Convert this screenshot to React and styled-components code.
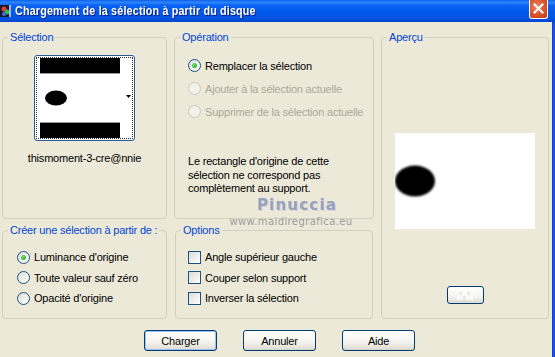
import React from 'react';
import styled, { createGlobalStyle } from 'styled-components';

const GlobalStyle = createGlobalStyle`
  html, body {
    margin: 0;
    padding: 0;
    background: #ece9d8;
  }
  body {
    font-family: 'Liberation Sans', Arial, sans-serif;
    font-size: 11px;
    letter-spacing: -0.2px;
    color: #000;
  }
`;

const Window = styled.div`
  position: relative;
  width: 555px;
  height: 357px;
  display: flex;
  flex-direction: column;
  overflow: hidden;
  background: #ece9d8;
`;

const TitleBar = styled.div`
  height: 22px;
  flex: none;
  display: flex;
  align-items: center;
  background: linear-gradient(
    to bottom,
    #0a5ee8 0%,
    #2f86fb 10%,
    #0a62f4 25%,
    #0058e8 55%,
    #0053e0 85%,
    #0044cf 100%
  );
  color: #fff;
  padding-right: 7px;
`;

const TitleIcon = styled.svg`
  width: 12px;
  height: 14px;
  margin: 0 3px 0 0;
  flex: none;
`;

const TitleText = styled.div`
  flex: 1;
  font-family: 'Liberation Sans', Arial, sans-serif;
  font-weight: bold;
  font-size: 12.5px;
  letter-spacing: 0.2px;
  text-shadow: 1px 1px 0 #0a1e80;
  white-space: nowrap;
  transform: scaleX(0.86);
  transform-origin: left center;
`;

const CloseButton = styled.div`
  width: 17px;
  height: 18px;
  margin-top: -4px;
  border: 1px solid #fff;
  border-top: none;
  border-radius: 0 0 3px 3px;
  background: radial-gradient(circle at 40% 35%, #ee8a66 0%, #de5a32 45%, #c2370f 100%);
  display: flex;
  align-items: center;
  justify-content: center;
`;

const Body = styled.div`
  flex: 1;
  display: flex;
`;

const Content = styled.div`
  flex: 1;
  padding: 15px 0 0 2px;
  display: flex;
  flex-direction: column;
`;

const RightFrame = styled.div`
  width: 3px;
  background: linear-gradient(to right, #0831d9, #1658e8, #0a45d6);
`;

const Grid = styled.div`
  display: grid;
  grid-template-columns: 165px 200px 168px;
  grid-template-rows: 182px 89px;
  column-gap: 7px;
  row-gap: 11px;
`;

const Group = styled.div`
  position: relative;
  box-sizing: border-box;
  border: 1px solid #d0d0bf;
  border-radius: 4px;
  grid-column: ${(p) => p.$col};
  grid-row: ${(p) => p.$row};
  width: ${(p) => p.$width || 'auto'};
  margin-left: ${(p) => p.$shift || 0}px;
  display: flex;
  flex-direction: column;
  align-items: ${(p) => (p.$center ? 'center' : 'stretch')};
  padding: ${(p) => p.$pad || '0'};
`;

const Legend = styled.span`
  position: absolute;
  top: -8px;
  left: 5px;
  padding: 0 2px;
  background: #ece9d8;
  color: #0046d5;
  line-height: 14px;
  white-space: nowrap;
`;

const Thumb = styled.div`
  position: relative;
  width: 101px;
  height: 86px;
  box-sizing: border-box;
  border: 1px solid #2c5c94;
  border-radius: 3px;
  background: #fff;
  padding: 2px 1px 2px 5px;
  display: flex;
  &::after {
    content: '';
    position: absolute;
    inset: 1px;
    border: 1px dotted #333;
  }
`;

const ThumbArrow = styled.div`
  flex: 1;
  display: flex;
  align-items: center;
  justify-content: flex-end;
  padding-right: 2px;
  padding-bottom: 4px;
`;

const FileName = styled.div`
  margin-top: 11px;
  font-size: 11px;
  white-space: nowrap;
`;

const OptionRow = styled.label`
  display: flex;
  align-items: center;
  height: ${(p) => p.$h || 20}px;
  gap: 4px;
  color: ${(p) => (p.$disabled ? '#aca899' : '#000')};
  white-space: nowrap;
`;

const Radio = styled.span`
  width: 13px;
  height: 13px;
  box-sizing: border-box;
  border-radius: 50%;
  border: 1px solid ${(p) => (p.$disabled ? '#cac8bb' : '#1c5180')};
  background: ${(p) =>
    p.$disabled
      ? '#f2f1ea'
      : 'linear-gradient(135deg, #dcdcd7 0%, #f6f6f4 70%, #ffffff 100%)'};
  display: flex;
  align-items: center;
  justify-content: center;
  flex: none;
  &::after {
    content: '';
    display: ${(p) => (p.$checked ? 'block' : 'none')};
    width: 5px;
    height: 5px;
    border-radius: 50%;
    background: radial-gradient(circle at 35% 35%, #6fde6f, #21a121);
  }
`;

const Checkbox = styled.span`
  width: 13px;
  height: 13px;
  box-sizing: border-box;
  border: 1px solid #1c5180;
  background: linear-gradient(135deg, #dcdcd7 0%, #f4f4f2 70%, #ffffff 100%);
  flex: none;
`;

const Note = styled.p`
  margin: 0;
  line-height: 13.5px;
  font-size: 11px;
`;

const Preview = styled.div`
  margin-top: 95px;
  width: 140px;
  height: 96px;
  background: #fff;
  display: flex;
  align-items: center;
`;

const MiniButton = styled.div`
  margin-top: 57px;
  width: 37px;
  height: 18px;
  box-sizing: border-box;
  border: 1px solid #003c74;
  border-radius: 3px;
  background: linear-gradient(to bottom, #ffffff 0%, #f4f4f0 60%, #dcdad0 100%);
  display: flex;
  align-items: center;
  justify-content: center;
`;

const ButtonRow = styled.div`
  display: flex;
  gap: 26px;
  margin-top: 11px;
  padding-left: 142px;
`;

const Button = styled.button`
  width: 73px;
  height: 21px;
  box-sizing: border-box;
  border: 1px solid #003c74;
  border-radius: 3px;
  background: linear-gradient(to bottom, #ffffff 0%, #f5f4ef 55%, #e3e1d8 90%, #d6d0c5 100%);
  font-family: 'Liberation Sans', Arial, sans-serif;
  font-size: 11px;
  letter-spacing: -0.2px;
  color: #000;
  padding: 0;
  box-shadow: ${(p) => (p.$default ? 'inset 0 0 0 1px #9ec1f2' : 'none')};
`;

const Watermark = styled.div`
  position: absolute;
  left: 222px;
  top: 195px;
  width: 150px;
  display: flex;
  flex-direction: column;
  align-items: center;
  pointer-events: none;
`;

const WmTitle = styled.div`
  font-family: 'DejaVu Sans', sans-serif;
  font-weight: bold;
  font-size: 15px;
  letter-spacing: 1.2px;
  color: #97a1bd;
  text-shadow: 1px 1px 0 #d4d6de;
  line-height: 20px;
`;

const WmUrl = styled.div`
  margin-left: -12px;
  margin-top: 1px;
  font-family: 'DejaVu Sans', sans-serif;
  font-size: 10px;
  letter-spacing: 0.4px;
  color: #9c9c9c;
  line-height: 12px;
`;

function App() {
  return (
    <>
      <GlobalStyle />
      <Window>
        <TitleBar>
          <TitleIcon viewBox="0 0 12 14">
            <rect x="0" y="1" width="11" height="12" fill="#1a1a2e" />
            <circle cx="4" cy="5" r="2.5" fill="#e23b3b" />
            <circle cx="7" cy="8" r="2.5" fill="#2fbf4a" />
            <circle cx="4" cy="10" r="2" fill="#3a6fe8" />
            <rect x="9" y="1" width="2" height="12" fill="#9fb6e8" />
          </TitleIcon>
          <TitleText>Chargement de la sélection à partir du disque</TitleText>
          <CloseButton>
            <svg width="11" height="11" viewBox="0 0 11 11">
              <path d="M1.5 1.5 L9.5 9.5 M9.5 1.5 L1.5 9.5" stroke="#fff" strokeWidth="2" strokeLinecap="square" />
            </svg>
          </CloseButton>
        </TitleBar>
        <Body>
          <Content>
            <Grid>
              <Group $col="1" $row="1" $center $pad="17px 0 0">
                <Legend>Sélection</Legend>
                <Thumb>
                  <svg width="80" height="80" viewBox="0 0 80 80">
                    <defs>
                      <filter id="blurA" x="-20%" y="-20%" width="140%" height="140%">
                        <feGaussianBlur stdDeviation="0.7" />
                      </filter>
                    </defs>
                    <rect x="0" y="0" width="80" height="80" fill="#fff" />
                    <rect x="0" y="0" width="80" height="15" fill="#000" />
                    <rect x="0" y="15" width="80" height="1" fill="#9a9a9a" />
                    <ellipse cx="16" cy="40" rx="11" ry="7.5" fill="#000" filter="url(#blurA)" />
                    <rect x="0" y="64" width="80" height="1" fill="#9a9a9a" />
                    <rect x="0" y="65" width="80" height="15" fill="#000" />
                  </svg>
                  <ThumbArrow>
                    <svg width="5" height="3" viewBox="0 0 5 3">
                      <path d="M0 0 H5 L2.5 3 Z" fill="#000" />
                    </svg>
                  </ThumbArrow>
                </Thumb>
                <FileName>thismoment-3-cre@nnie</FileName>
              </Group>

              <Group $col="2" $row="1" $pad="16px 0 0 13px">
                <Legend>Opération</Legend>
                <OptionRow $h={23}>
                  <Radio $checked />
                  Remplacer la sélection
                </OptionRow>
                <OptionRow $h={23} $disabled>
                  <Radio $disabled />
                  Ajouter à la sélection actuelle
                </OptionRow>
                <OptionRow $h={23} $disabled>
                  <Radio $disabled />
                  Supprimer de la sélection actuelle
                </OptionRow>
                <div style={{ height: 32 }} />
                <Note>
                  Le rectangle d'origine de cette
                  <br />
                  sélection ne correspond pas
                  <br />
                  complètement au support.
                </Note>
              </Group>

              <Group $col="3" $row="1 / span 2" $center $pad="0">
                <Legend>Aperçu</Legend>
                <Preview>
                  <svg width="42" height="36" viewBox="0 0 42 36">
                    <defs>
                      <filter id="blurB" x="-20%" y="-20%" width="140%" height="140%">
                        <feGaussianBlur stdDeviation="0.9" />
                      </filter>
                    </defs>
                    <ellipse cx="20" cy="18" rx="20" ry="15.5" fill="#000" filter="url(#blurB)" />
                  </svg>
                </Preview>
                <MiniButton>
                  <svg width="20" height="12" viewBox="0 0 20 12">
                    <rect x="2" y="2" width="16" height="9" fill="#fafafa" />
                    <rect x="4" y="3" width="3" height="3" fill="#e8e8e8" />
                    <rect x="12" y="3" width="3" height="3" fill="#e8e8e8" />
                    <rect x="8" y="7" width="3" height="4" fill="#e8e8e8" />
                  </svg>
                </MiniButton>
              </Group>

              <Group $col="1" $row="2" $pad="16px 0 0 14px">
                <Legend>Créer une sélection à partir de :</Legend>
                <OptionRow $h={20.5}>
                  <Radio $checked />
                  Luminance d'origine
                </OptionRow>
                <OptionRow $h={20.5}>
                  <Radio />
                  Toute valeur sauf zéro
                </OptionRow>
                <OptionRow $h={20.5}>
                  <Radio />
                  Opacité d'origine
                </OptionRow>
              </Group>

              <Group $col="2" $row="2" $width="198px" $shift={1} $pad="16px 0 0 12px">
                <Legend>Options</Legend>
                <OptionRow $h={20.5}>
                  <Checkbox />
                  Angle supérieur gauche
                </OptionRow>
                <OptionRow $h={20.5}>
                  <Checkbox />
                  Couper selon support
                </OptionRow>
                <OptionRow $h={20.5}>
                  <Checkbox />
                  Inverser la sélection
                </OptionRow>
              </Group>
            </Grid>

            <ButtonRow>
              <Button $default>Charger</Button>
              <Button>Annuler</Button>
              <Button>Aide</Button>
            </ButtonRow>
          </Content>
          <RightFrame />
        </Body>

        <Watermark>
          <WmTitle>Pinuccia</WmTitle>
          <WmUrl>www.maidiregrafica.eu</WmUrl>
        </Watermark>
      </Window>
    </>
  );
}

export default App;
